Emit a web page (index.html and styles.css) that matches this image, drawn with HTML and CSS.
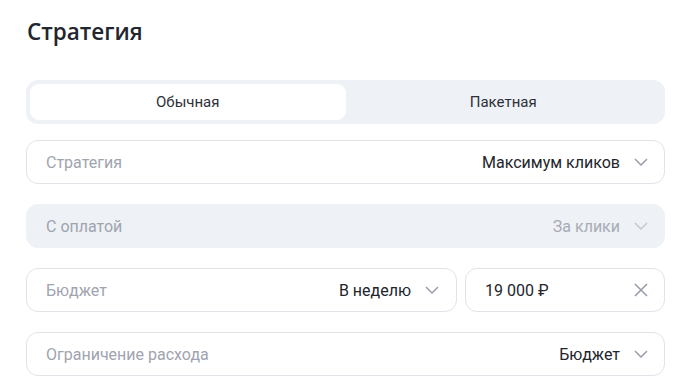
FILE: index.html
```html
<!DOCTYPE html>
<html lang="ru">
<head>
<meta charset="utf-8">
<link rel="stylesheet" href="styles.css">
</head>
<body>
<div class="page">
  <h1 class="title">Стратегия</h1>
  <div class="tabs">
    <div class="tab tab-active">Обычная</div>
    <div class="tab">Пакетная</div>
  </div>
  <div class="field">
    <span class="label">Стратегия</span>
    <span class="value">Максимум кликов</span>
    <svg class="chev" width="14" height="8" viewBox="0 0 14 8"><path d="M1 1l6 6 6-6" fill="none" stroke="currentColor" stroke-width="1.5"/></svg>
  </div>
  <div class="field field-filled">
    <span class="label">С оплатой</span>
    <span class="value value-muted">За клики</span>
    <svg class="chev chev-muted" width="14" height="8" viewBox="0 0 14 8"><path d="M1 1l6 6 6-6" fill="none" stroke="currentColor" stroke-width="1.5"/></svg>
  </div>
  <div class="row">
    <div class="field field-grow">
      <span class="label">Бюджет</span>
      <span class="value">В неделю</span>
      <svg class="chev" width="14" height="8" viewBox="0 0 14 8"><path d="M1 1l6 6 6-6" fill="none" stroke="currentColor" stroke-width="1.5"/></svg>
    </div>
    <div class="field field-input">
      <span class="input-value">19 000 ₽</span>
      <svg class="clear" width="14" height="14" viewBox="0 0 14 14"><path d="M1 1l12 12M13 1L1 13" fill="none" stroke="currentColor" stroke-width="1.6"/></svg>
    </div>
  </div>
  <div class="field">
    <span class="label">Ограничение расхода</span>
    <span class="value">Бюджет</span>
    <svg class="chev" width="14" height="8" viewBox="0 0 14 8"><path d="M1 1l6 6 6-6" fill="none" stroke="currentColor" stroke-width="1.5"/></svg>
  </div>
</div>
</body>
</html>
```

FILE: styles.css
```css
* { box-sizing: border-box; }
html, body { margin: 0; padding: 0; background: #fff; }
body { font-family: Roboto, "Noto Sans", sans-serif; color: #21252b; }
.page {
  width: 639px;
  margin-left: 26px;
  padding-top: 17px;
  display: flex;
  flex-direction: column;
  gap: 20px;
}
.title {
  margin: 0 0 14px 1px;
  font-family: "Open Sans", "Noto Sans", sans-serif;
  font-size: 22.5px;
  line-height: 29px;
  font-weight: 600;
  color: #22262e;
}
.tabs {
  height: 44px;
  padding: 4px;
  background: #eef1f6;
  border-radius: 12px;
  display: grid;
  grid-template-columns: 1fr 1fr;
  margin-bottom: -4px;
}
.tab {
  display: flex;
  align-items: center;
  justify-content: center;
  font-size: 15px;
  color: #2d3038;
  border-radius: 9px;
}
.tab-active { background: #fff; }
.field {
  height: 44px;
  border: 1px solid #e1e3e8;
  border-radius: 12px;
  display: flex;
  align-items: center;
  padding: 0 16px 0 19px;
  font-size: 16px;
}
.field-filled { background: #eef1f6; border-color: #eef1f6; }
.label { color: #a0a4ae; flex: 1; }
.value { color: #22252b; margin-right: 14px; }
.value-muted { color: #a7abb5; }
.chev { color: #9a9eab; flex: none; }
.chev-muted { color: #c4c7d0; }
.row { display: flex; gap: 8px; }
.field-grow { flex: 1; padding-right: 17px; }
.field-input { width: 200px; padding-left: 19px; }
.input-value { flex: 1; color: #22252b; }
.clear { color: #9a9eab; flex: none; }
```
